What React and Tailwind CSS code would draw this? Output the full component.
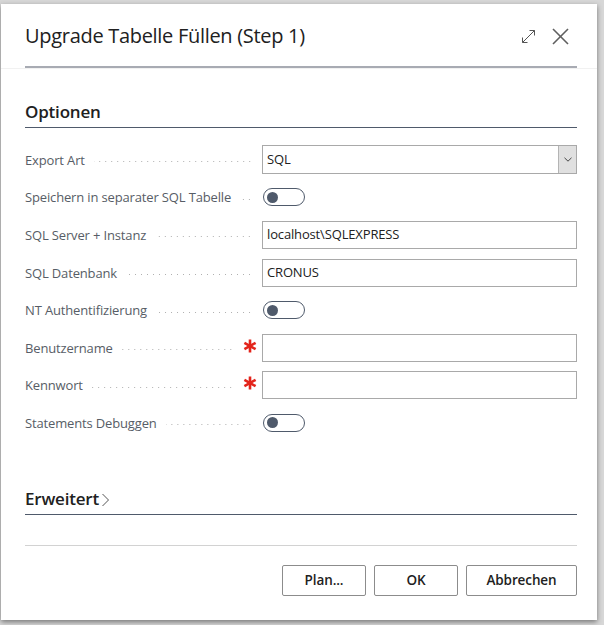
const FONT = { fontFamily: '"Open Sans", "Noto Sans", sans-serif' };

function Leader({ required }) {
  return (
    <>
      <div className="flex-1 ml-[9px] h-[1px] mt-[4px] bg-[linear-gradient(to_right,transparent_2px,#b0b0b0_2px,#b0b0b0_3px,transparent_3px)] bg-[length:6px_1px] bg-repeat-x bg-right" />
      {required ? (
        <div className="w-[28px] h-full flex items-center pl-[9px]">
          <svg width="14" height="14" viewBox="0 0 14 14" className="-mt-[4px]">
            <g stroke="#e3241b" strokeWidth="2.6" strokeLinecap="butt">
              <line x1="7" y1="0.5" x2="7" y2="13.5" />
              <line x1="1.4" y1="3.8" x2="12.6" y2="10.2" />
              <line x1="1.4" y1="10.2" x2="12.6" y2="3.8" />
            </g>
          </svg>
        </div>
      ) : (
        <div className="w-[9px]" />
      )}
    </>
  );
}

function Row({ label, required, children }) {
  return (
    <div className="flex items-center h-[37.6px]">
      <div className="flex items-center w-[237px] shrink-0 h-full">
        <span className="text-[13px] tracking-[-0.15px] text-[#575d66] whitespace-nowrap leading-[18px]">{label}</span>
        <Leader required={required} />
      </div>
      <div className="flex-1 flex items-center">{children}</div>
    </div>
  );
}

function TextInput({ value }) {
  return (
    <div className="w-[315px] h-[28px] border border-[#a9a9a9] bg-white flex items-center pl-[4px] text-[13px] tracking-[-0.15px] text-[#212121]">
      {value}
    </div>
  );
}

function Toggle() {
  return (
    <div className="ml-[1px] w-[42px] h-[18px] rounded-full border-[1.5px] border-[#4f5a6b] flex items-center">
      <div className="ml-[2.5px] w-[11px] h-[11px] rounded-full bg-[#4f5a6b]" />
    </div>
  );
}

function Select({ value }) {
  return (
    <div className="w-[315px] h-[29px] border border-[#a9a9a9] bg-white flex items-stretch text-[13px] tracking-[-0.15px] text-[#212121]">
      <div className="flex-1 flex items-center pl-[4px]">{value}</div>
      <div className="w-[18px] bg-[#e0e0e0] border-l border-[#b4b4b4] flex items-center justify-center">
        <svg width="8" height="5" viewBox="0 0 8 5">
          <polyline points="0.5,0.8 4,4.2 7.5,0.8" fill="none" stroke="#444" strokeWidth="1" />
        </svg>
      </div>
    </div>
  );
}

function Button({ children, w }) {
  return (
    <button className={`${w} h-[31px] border border-[#8c8c8c] rounded-[2px] bg-white text-[13.5px] font-semibold tracking-[-0.1px] text-[#212121] flex items-center justify-center`}>
      {children}
    </button>
  );
}

export default function App() {
  return (
    <div style={FONT} className="w-[604px] h-[625px] bg-[#d7d7d7] pt-[4px] pl-[1px] overflow-hidden">
      <div className="w-[596px] h-[616px] bg-white shadow-[0_2px_5px_rgba(0,0,0,0.45)] flex flex-col">
        {/* Header */}
        <div className="flex items-center pl-[24px] pr-[28px] pt-[18px]">
          <h1 className="flex-1 text-[20px] leading-[28px] tracking-[-0.3px] text-[#212121] font-normal">
            Upgrade Tabelle Füllen (Step 1)
          </h1>
          <div className="flex items-center gap-[16px]">
            <svg width="15" height="15" viewBox="0 0 15 15">
              <g fill="none" stroke="#555" strokeWidth="1">
                <line x1="1.5" y1="13.5" x2="13.5" y2="1.5" />
                <polyline points="8.5,1.5 13.5,1.5 13.5,6.5" />
                <polyline points="1.5,8.5 1.5,13.5 6.5,13.5" />
              </g>
            </svg>
            <svg width="17" height="17" viewBox="0 0 17 17">
              <g stroke="#5f5f5f" strokeWidth="1.6">
                <line x1="1" y1="1" x2="16" y2="16" />
                <line x1="16" y1="1" x2="1" y2="16" />
              </g>
            </svg>
          </div>
        </div>
        <div className="mt-[16px] ml-[24px] mr-[20px] h-[2px] bg-[#a8abb3]" />
        <div className="h-px bg-[#f1f1f1]" />

        {/* Body */}
        <div className="pl-[24px] pr-[20px] flex flex-col">
          <div className="mt-[31px] border-b border-[#4f5a6b] pb-[3px]">
            <h2 className="text-[17px] leading-[24px] font-semibold tracking-[-0.2px] text-[#212121]">Optionen</h2>
          </div>
          <div className="mt-[13px] flex flex-col">
            <Row label="Export Art"><Select value="SQL" /></Row>
            <Row label="Speichern in separater SQL Tabelle"><Toggle /></Row>
            <Row label="SQL Server + Instanz"><TextInput value="localhost\SQLEXPRESS" /></Row>
            <Row label="SQL Datenbank"><TextInput value="CRONUS" /></Row>
            <Row label="NT Authentifizierung"><Toggle /></Row>
            <Row label="Benutzername" required><TextInput value="" /></Row>
            <Row label="Kennwort" required><TextInput value="" /></Row>
            <Row label="Statements Debuggen"><Toggle /></Row>
          </div>

          <div className="mt-[45px] border-b border-[#4f5a6b] pb-[3px] flex items-center">
            <h2 className="text-[17px] leading-[24px] font-semibold tracking-[-0.2px] text-[#212121]">Erweitert</h2>
            <svg width="9" height="14" viewBox="0 0 9 14" className="ml-[2px] mt-[2px]">
              <polyline points="1.5,1 7.5,7 1.5,13" fill="none" stroke="#555" strokeWidth="1" />
            </svg>
          </div>

          <div className="mt-[30px] h-px bg-[#d2d2d2]" />

          <div className="mt-[19px] flex justify-end gap-[8px]">
            <Button w="w-[84px]">Plan...</Button>
            <Button w="w-[84px]">OK</Button>
            <Button w="w-[111px]">Abbrechen</Button>
          </div>
        </div>
      </div>
    </div>
  );
}
